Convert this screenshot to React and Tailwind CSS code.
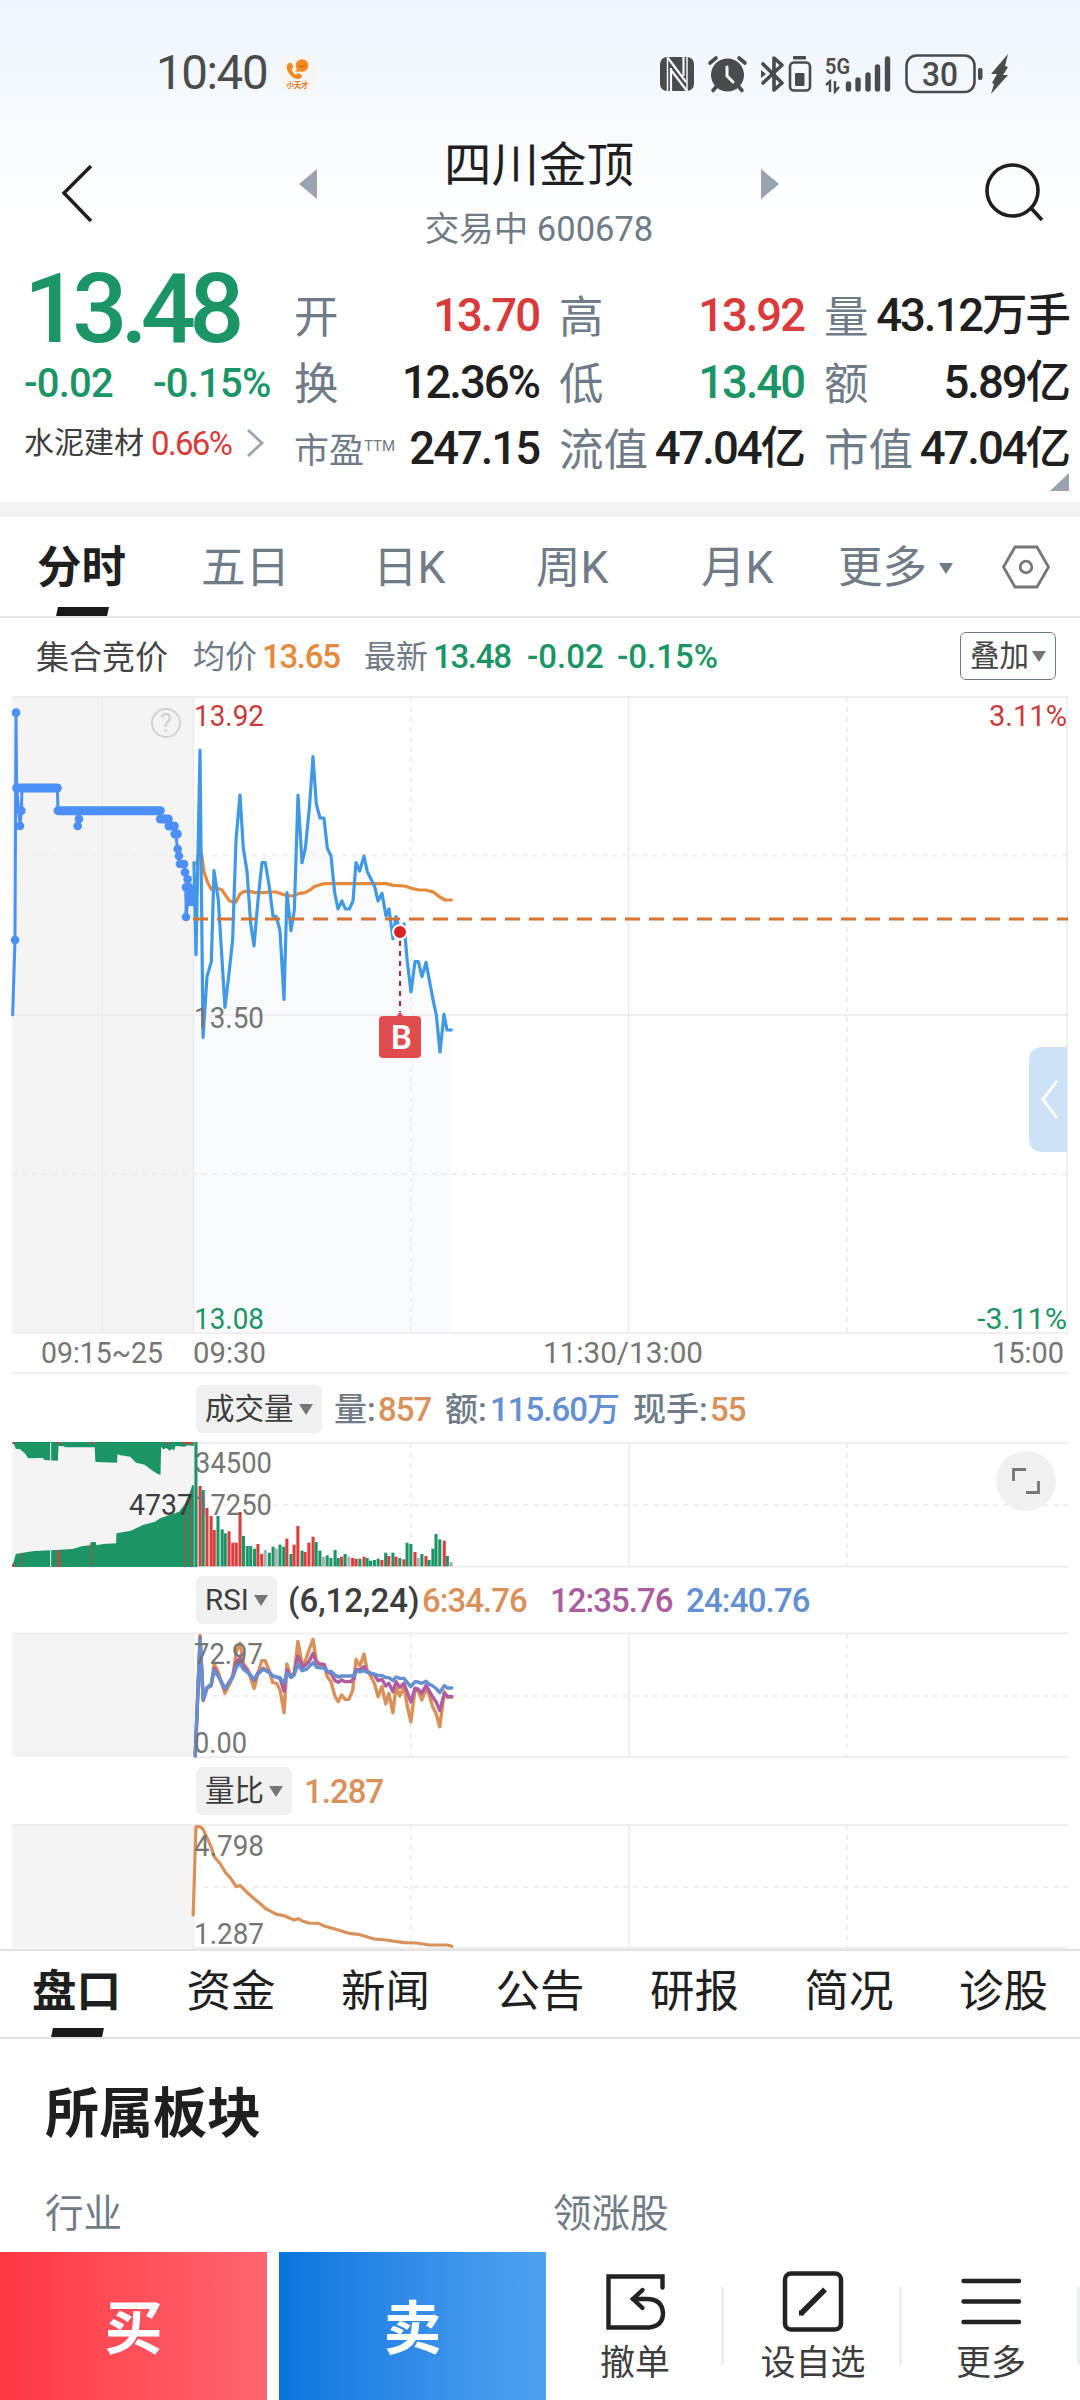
import React, { useState } from 'react'

const GREY = '#6f7b87'
const DOWN = '#1b9566'
const GRID = '#efeff0'

const QUOTES = [
  [{ k: '开', v: '13.70', c: 'text-[#d93a3a]' }, { k: '高', v: '13.92', c: 'text-[#d93a3a]' }, { k: '量', v: '43.12万手', c: 'text-[#1f1f1f]' }],
  [{ k: '换', v: '12.36%', c: 'text-[#1f1f1f]' }, { k: '低', v: '13.40', c: 'text-[#1b9566]' }, { k: '额', v: '5.89亿', c: 'text-[#1f1f1f]' }],
  [{ k: '市盈', sup: 'TTM', v: '247.15', c: 'text-[#1f1f1f]' }, { k: '流值', v: '47.04亿', c: 'text-[#1f1f1f]' }, { k: '市值', v: '47.04亿', c: 'text-[#1f1f1f]' }]
]

const PERIODS = [
  { id: '分时', w: 'w-[164px]' },
  { id: '五日', w: 'w-[172px]' },
  { id: '日K', w: 'w-[163px]' },
  { id: '周K', w: 'w-[165px]' },
  { id: '月K', w: 'w-[137px]' }
]

const INFO_TABS = ['盘口', '资金', '新闻', '公告', '研报', '简况', '诊股']

// Series points, three units to a pixel.
const PRICE = '582,518 588,794 600,180 609,1042 621,860 634,815 642,542 655,630 675,952 687,850 698,748 708,450 720,315 730,475 741,543 752,700 762,768 775,620 786,518 796,518 808,590 819,678 829,680 840,722 852,928 861,608 873,722 883,660 894,315 906,518 916,475 928,355 939,200 949,342 960,384 972,384 982,475 993,498 1004,608 1014,657 1026,633 1036,657 1048,657 1059,633 1068,518 1079,543 1092,498 1102,545 1113,567 1124,590 1134,633 1146,610 1158,678 1167,657 1179,746 1188,680 1200,724 1212,702 1222,815 1233,906 1245,815 1255,815 1266,860 1278,817 1288,870 1299,928 1309,975 1320,1086 1332,973 1341,1020 1354,1020'
const AVERAGE = '583,522 590,520 600,470 606,500 612,545 622,575 634,598 650,594 666,600 676,615 688,632 698,636 708,636 720,612 732,604 750,604 765,608 790,608 808,606 829,606 845,612 860,617 880,618 895,611 915,608 930,600 942,590 960,584 975,581 1158,581 1180,586 1213,588 1235,595 1258,600 1278,600 1300,606 1318,620 1335,630 1354,630'
const AUCTION = '38,975 45,750 48,68 50,294 60,408 64,362 66,294 172,294 174,362 232,362 233,408 237,387 240,362 482,362 480,387 505,387 508,408 522,408 527,432 533,477 537,498 540,522 552,522 555,547 563,568 558,592 558,681 568,600 572,640 576,590 580,645'
const AUCTION_DOTS = [[48, 68], [45, 750], [60, 408], [64, 362], [233, 408], [237, 387], [533, 477], [537, 498], [540, 522], [552, 522], [555, 547], [563, 568], [558, 592], [568, 592], [566, 615], [573, 636], [558, 681]]
const AUCTION_RUNS = [[50, 172, 294], [174, 481, 362], [481, 505, 387], [507, 523, 408], [525, 532, 432]]

const VOL_TOP = '36,216 40,222 46,236 58,238 72,250 82,265 125,264 128,270 168,272 170,228 186,229 188,232 275,232 277,276 340,278 341,253 350,256 378,260 395,278 420,284 440,300 458,312 466,314 468,230 474,238 484,234 492,242 500,236 505,242 510,228 536,230 545,226 563,228 563,216'
const VOL_BASE = '36,591 36,588 46,552 80,546 100,543 160,540 210,537 240,528 262,526 266,516 278,516 280,526 300,522 337,520 338,490 380,482 415,465 450,455 465,445 520,425 535,405 552,365 558,346 563,346 563,591'
const BARS = '581 348 r;590 360 g;601 414 r;613 438 r;622 480 r;633 438 g;645 478 g;654 490 g;665 484 r;676 518 r;686 518 r;697 426 r;707 498 g;718 528 g;728 528 g;739 536 g;749 522 r;760 552 r;770 540 n;782 548 g;793 530 g;802 536 n;813 524 g;824 530 g;833 506 r;845 552 g;854 524 r;865 468 r;877 542 g;886 546 r;897 518 r;909 500 r;918 516 g;929 542 g;939 560 n;950 556 g;961 564 g;973 540 g;982 564 g;992 560 r;1002 552 g;1013 560 n;1024 564 r;1034 566 r;1045 566 g;1057 560 r;1066 564 g;1076 572 g;1087 570 g;1098 566 g;1109 570 r;1120 548 g;1129 558 r;1141 548 g;1150 560 r;1161 564 g;1173 568 r;1182 518 g;1193 522 g;1205 546 r;1214 564 n;1225 552 g;1237 558 r;1246 570 g;1257 536 g;1266 492 g;1277 508 g;1290 512 r;1299 558 g;1310 576 n'
  .split(';').map(s => s.split(' '))
const BAR_COLOR = { r: '#dc3d3d', g: '#1b9566', n: '#a9b0ae' }

const RSI6 = '567,408 581,46 590,242 601,205 613,198 622,132 633,155 653,220 668,190 676,170 686,95 697,70 707,130 720,150 728,175 738,205 748,165 760,122 770,122 781,150 792,188 803,190 813,210 825,278 833,132 845,172 854,165 865,64 877,130 886,125 897,90 909,58 918,120 929,135 941,135 950,170 961,185 973,230 982,245 992,225 1002,238 1013,238 1024,212 1034,118 1045,138 1057,102 1066,150 1076,168 1087,190 1098,230 1109,200 1120,252 1129,220 1141,278 1150,200 1161,228 1173,200 1182,255 1193,305 1205,210 1214,212 1225,240 1237,205 1246,225 1257,262 1266,280 1277,320 1290,215 1299,232 1312,232'
const RSI12 = '567,406 581,52 590,240 601,203 613,195 622,145 633,165 653,208 676,168 686,125 697,115 707,138 720,155 738,182 748,160 765,145 781,155 792,168 813,175 825,214 833,150 845,172 854,160 865,108 880,142 897,125 909,100 920,130 941,133 950,155 961,160 973,182 982,187 992,180 1002,185 1018,185 1028,175 1034,148 1045,150 1057,140 1066,155 1087,165 1098,182 1109,178 1120,198 1129,190 1141,215 1150,185 1161,202 1173,190 1182,215 1193,246 1205,205 1214,207 1225,220 1237,196 1246,212 1257,232 1266,245 1277,272 1290,220 1299,229 1312,229'
const RSI24 = '567,408 581,58 590,238 601,203 613,195 622,152 633,168 653,205 676,172 686,142 697,130 707,148 720,158 738,178 748,162 765,148 781,158 792,168 813,173 825,190 833,158 845,172 854,165 865,132 877,152 890,148 909,128 920,142 941,145 950,154 961,154 973,165 982,171 992,168 1026,168 1034,152 1045,156 1057,152 1066,157 1087,162 1098,167 1109,166 1120,173 1129,173 1141,182 1150,171 1161,175 1173,175 1182,187 1193,200 1205,185 1214,186 1225,190 1237,184 1246,193 1257,198 1266,205 1277,218 1290,197 1299,204 1312,204'
const RATIO = '561,885 569,620 581,620 590,628 613,680 622,710 640,732 655,758 670,775 686,800 698,797 720,820 740,838 760,855 770,865 803,883 825,887 854,900 865,896 880,904 897,909 925,910 941,918 975,928 1013,940 1040,943 1087,957 1120,960 1173,968 1210,969 1246,975 1299,975 1312,979'

function Label({ x, y, w, end, fill = '#757575', children }) {
  return (
    <text x={x} y={y} textLength={w} lengthAdjust="spacingAndGlyphs" textAnchor={end ? 'end' : 'start'} fontSize="29.5" fill={fill}>
      {children}
    </text>
  )
}

function Line({ points, color, width = 3.6 }) {
  return <polyline points={points} fill="none" stroke={color} strokeWidth={width} strokeLinejoin="round" strokeLinecap="round" vectorEffect="non-scaling-stroke" />
}

function Caret({ className = '', color = '#757575' }) {
  return (
    <svg className={className} width="14" height="11" viewBox="0 0 14 11"><path d="M0 0H14L7 11Z" fill={color} /></svg>
  )
}

// Grid shared by the three small panes under the price chart.
function PaneGrid({ top, mid, bottom }) {
  return (
    <g stroke={GRID} strokeWidth="2">
      <rect x="12" y={top} width="181" height={bottom - top} fill="#f4f4f4" stroke="none" />
      <path d={`M12 ${top}H1068M193 ${bottom}H1068`} />
      <path d={`M193.5 ${top}V${bottom}M629 ${top}V${bottom}`} />
      <path d={`M193 ${mid}H1068`} strokeDasharray="5 5" />
      <path d={`M411 ${top}V${bottom}M847 ${top}V${bottom}`} strokeDasharray="5 5" />
    </g>
  )
}

function Chip({ children }) {
  return (
    <button className="flex h-12 items-center gap-[5px] rounded-md bg-[#f1f1f1] px-[9px] text-[29.500px] whitespace-nowrap text-[#3d3d3d]">
      <span className="pt-0.5">{children}</span><Caret />
    </button>
  )
}

function StatusBar() {
  return (
    <div className="flex h-[113px] pt-[52px] pl-[156px] text-[#4a4b4d]">
      <span className="w-[123px] text-[47.500px] leading-[42px] tracking-[-0.03em]">10:40</span>
      <svg width="36" height="37" viewBox="279 56 36 37" className="mt-[4px]">
        <rect x="279" y="56" width="36" height="36" rx="7" fill="#f8f6f4" />
        <path d="M289 63C285.500 65 286.500 70 289.500 74C292.500 78 297 80 300 78.500C302 77.500 302.500 76 301.500 75L298 73L295.500 75C293.500 73.500 292 71 291.500 69L293.500 67.500L292 63.500C291 62.500 290 62.500 289 63Z" fill="#f58a1f" />
        <circle cx="302" cy="65.500" r="6.300" fill="#f58a1f" />
        <path d="M298 68L295 72L301 71Z" fill="#f58a1f" />
        <path d="M299 65.500Q302 68.500 305 65.500" stroke="#b85c10" fill="none" />
        <text x="286.500" y="87.500" fontSize="7.500" textLength="22" fontWeight="bold" fill="#e07a1a">小天才</text>
      </svg>
      <svg className="ml-[341px]" width="360" height="44" viewBox="656 51 360 44" fill="#4a4b4d">
        {/* NFC */}
        <rect x="660" y="56" width="34" height="34" rx="7" />
        <path d="M667.500 91V56" stroke="#f3f7fe" strokeWidth="1.500" />
        <path d="M687 90V55" stroke="#f3f7fe" strokeWidth="1.500" />
        <path d="M668 57L686 81M671 67V92M671 69L687 90M683.500 55V75" fill="none" stroke="#f3f7fe" strokeWidth="2.200" />
        {/* alarm */}
        <circle cx="727.500" cy="74" r="16.500" />
        <g fill="none" stroke="#4a4b4d" strokeWidth="3.600" strokeLinecap="round">
          <path d="M710 62L716 57M745 62L739 57M716 86L713 89.500M739 86L742 89.500" />
          <path d="M727 66V75L733 81" stroke="#f3f7fe" strokeWidth="3" />
        </g>
        {/* bluetooth */}
        <path d="M763 63L782 82L774 89V57L782 64L763 82" fill="none" stroke="#4a4b4d" strokeWidth="3.600" strokeLinejoin="round" strokeLinecap="round" />
        <path d="M761 69L766 73L761 77Z" />
        <rect x="790" y="61.500" width="20" height="28" rx="4" fill="none" stroke="#4a4b4d" strokeWidth="2.600" />
        <rect x="793" y="55" width="13" height="3.500" rx="1" />
        <rect x="795" y="72" width="9.500" height="13" rx="1" />
        {/* signal */}
        <text x="825" y="72.500" fontSize="22" fontWeight="600" textLength="25" lengthAdjust="spacingAndGlyphs">5G</text>
        <path d="M826 84L830 80.500V91M835 80V90.500L839 86" fill="none" stroke="#4a4b4d" strokeWidth="2.400" />
        <g stroke="#4a4b4d" strokeWidth="5.400" strokeLinecap="round">
          <path d="M848.500 83V88M858 79V88M868 74V88M877.500 66V88M887.500 58V88" />
        </g>
        {/* battery */}
        <rect x="906.500" y="54.500" width="68" height="36.500" rx="10" fill="none" stroke="#4a4b4d" strokeWidth="2.600" />
        <text x="940" y="84.500" fontSize="33" fontWeight="500" textAnchor="middle" textLength="36" lengthAdjust="spacingAndGlyphs">30</text>
        <rect x="978" y="67" width="4.500" height="12" rx="2" />
        <path d="M1008 53L991 73H997L992 82L994 83L991 93L1008 74H1003L1008 66L1005 65Z" />
      </svg>
    </div>
  )
}

function TitleBar() {
  return (
    <header className="flex h-[137px] items-start justify-between pr-[34px] pl-9">
      <button className="mt-[50px] ml-6"><svg width="36" height="60" viewBox="0 0 36 60"><path d="M31 3L4 30L31 58" fill="none" stroke="#1f1f1f" strokeWidth="3.5" /></svg></button>
      <div className="flex w-[480px] items-start justify-between">
        <svg className="mt-[55px]" width="18" height="32" viewBox="0 0 18 32"><path d="M18 1V31L0 16Z" fill="#9aa4b0" /></svg>
        <div className="text-center">
          <h1 className="mt-[28px] text-[47.500px] leading-[50px] text-[#1f1f1f]">四川金顶</h1>
          <p className="mt-[18px] text-[34.500px] leading-[40px] text-[#6f7b87]">交易中 600678</p>
        </div>
        <svg className="mt-[55px]" width="18" height="32" viewBox="0 0 18 32"><path d="M0 1V31L18 16Z" fill="#9aa4b0" /></svg>
      </div>
      <button className="mt-[48px]"><svg width="64" height="62" viewBox="0 0 64 62"><g fill="none" stroke="#1f1f1f" strokeWidth="3.6"><circle cx="30.500" cy="29.500" r="25.500" /><path d="M49 47L60 59" /></g></svg></button>
    </header>
  )
}

function Quote() {
  return (
    <section className="flex h-[252px] pr-[11px]">
      <div className="flex w-[294px] shrink-0 flex-col pl-6 text-[#1b9566]">
        <div className="mt-[5px] h-[108px] text-[97px] leading-[108px] font-medium tracking-[-0.07em]">13.48</div>
        <div className="mt-[-1px] flex h-[44px] text-[40px] leading-[44px] font-medium tracking-[-0.02em]">
          <span className="w-[129px]">-0.02</span><span>-0.15%</span>
        </div>
        <div className="mt-[17px] flex h-10 items-center text-[30px] whitespace-nowrap text-[#3d3d3d]">
          水泥建材
          <span className="ml-[7px] w-[95px] text-[33px] tracking-[-0.05em] text-[#d93a3a]">0.66%</span>
          <svg width="19" height="30" viewBox="0 0 19 30"><path d="M2 2L16 15L2 28" fill="none" stroke="#9aa4b0" strokeWidth="2.8" /></svg>
        </div>
      </div>
      <div className="relative mt-[33px] flex flex-1 flex-col">
        {QUOTES.map((row, i) => (
          <div key={i} className="grid h-[66.5px] grid-cols-[245px_245px_245px] gap-x-[20px]">
            {row.map(q => (
              <div key={q.k} className="flex items-center justify-between whitespace-nowrap">
                <span className={q.sup ? 'flex pt-1 text-[35px] text-[#6f7b87]' : 'pt-1 text-[44.500px] text-[#6f7b87]'}>
                  {q.k}{q.sup && <sup className="pt-[12px] text-[15px] leading-4">{q.sup}</sup>}
                </span>
                <span className={`text-[45.500px] leading-[50px] font-medium tracking-[-0.045em] ${q.c}`}>{q.v}</span>
              </div>
            ))}
          </div>
        ))}
        <svg className="absolute right-0 top-[190px]" width="19" height="18" viewBox="0 0 19 18"><path d="M19 0V18H0Z" fill="#9aa4b0" /></svg>
      </div>
    </section>
  )
}

function PeriodTabs() {
  const [period, setPeriod] = useState('分时')
  return (
    <nav className="flex h-[101px] items-center border-b-2 border-[#e9e9ea] pl-[37px] text-[44.500px] text-[#6f7b87]">
      {PERIODS.map(p => (
        <button key={p.id} onClick={() => setPeriod(p.id)} className={`relative h-full pt-[3px] text-left ${p.w} ${period === p.id ? 'font-bold text-[#1f1f1f]' : ''}`}>
          {p.id}
          {period === p.id && <i className="absolute bottom-0 left-[20px] h-[9px] w-[51px] -skew-x-12 bg-[#1a1a1a]" />}
        </button>
      ))}
      <button className="flex w-[164px] items-center gap-3 pt-[3px]">更多<Caret color={GREY} /></button>
      <svg width="48" height="44" viewBox="0 0 48 44" fill="none" stroke="#777" strokeWidth="2.8">
        <path d="M13 2H35L46.500 22L35 42H13L1.500 22Z" /><circle cx="24" cy="22" r="5.800" />
      </svg>
    </nav>
  )
}

function PriceInfo() {
  return (
    <div className="flex h-[72px] items-center pt-1 pr-6 pl-9 text-[33px] whitespace-nowrap">
      <span className="w-[157px] pt-0.5 text-[#444]">集合竞价</span>
      <span className="w-[69px] pt-0.5 text-[32px] text-[#6f7b87]">均价</span>
      <span className="w-[102px] font-medium tracking-[-0.04em] text-[#e58a3c]">13.65</span>
      <span className="w-[69px] pt-0.5 text-[32px] text-[#6f7b87]">最新</span>
      <span className="w-[94px] font-medium tracking-[-0.04em] text-[#1b9566]">13.48</span>
      <span className="w-[90px] font-medium text-[#1b9566]">-0.02</span>
      <span className="font-medium text-[#1b9566]">-0.15%</span>
      <button className="ml-auto flex h-[48px] w-[96px] items-center justify-center gap-[3px] rounded-md border border-[#6f7b87] text-[29.500px] text-[#444]"><span className="pt-0.5">叠加</span><Caret /></button>
    </div>
  )
}

function PriceChart() {
  return (
    <svg className="block" width="1080" height="684" viewBox="0 690 1080 684">
      <rect x="12" y="697" width="181" height="636" fill="#f4f4f4" />
      <g transform="translate(0 690) scale(0.33333)">
        <polygon points={`581,1929 ${PRICE} 1354,1929`} fill="#f9fafe" />
      </g>
      <g fill="none" stroke={GRID} strokeWidth="2">
        <path d="M12 697H1068M12 1015H1068M12 1333H1068M12 1373H1068" />
        <path d="M102 697V1333M193.500 697V1333M628.500 697V1333M1067 697V1333" stroke="#ebebec" strokeWidth="1.500" />
        <path d="M12 855.500H1068M12 1174H1068" strokeDasharray="5 5" />
        <path d="M411 697V1333M847 697V1333" strokeDasharray="5 5" />
      </g>
      <circle cx="166" cy="723" r="14" fill="none" stroke="#d2d2d2" strokeWidth="2" />
      <text x="166" y="732" fontSize="25" textAnchor="middle" fill="#d2d2d2">?</text>
      <g transform="translate(0 690) scale(0.33333)">
        <Line points={AUCTION} color="#4b8ff7" width={3} />
        {AUCTION_RUNS.map(([a, b, y]) => <path key={a} d={`M${a} ${y}H${b}`} stroke="#4b8ff7" strokeWidth="27" strokeLinecap="round" />)}
        {AUCTION_DOTS.map(([x, y], i) => <circle key={i} cx={x} cy={y} r="13" fill="#4b8ff7" />)}
        <Line points={AVERAGE} color="#e58a3c" width={3.2} />
        <Line points={PRICE} color="#4199e6" width={3.2} />
      </g>
      <path d="M193 919H1068" stroke="#d9742f" strokeWidth="3.2" strokeDasharray="15 9" />
      <Label x={194} y={726} w={70} fill="#c93a3a">13.92</Label>
      <Label x={194} y={1028} w={70}>13.50</Label>
      <Label x={194} y={1329} w={70} fill={DOWN}>13.08</Label>
      <Label x={1067} y={726} w={78} end fill="#c93a3a">3.11%</Label>
      <Label x={1067} y={1329} w={90} end fill={DOWN}>-3.11%</Label>
      <Label x={41} y={1363} w={122}>09:15~25</Label>
      <Label x={193} y={1363} w={73}>09:30</Label>
      <Label x={543} y={1363} w={160}>11:30/13:00</Label>
      <Label x={1064} y={1363} w={72} end>15:00</Label>
      {/* buy marker */}
      <path d="M400 941V1012" stroke="#9c3540" strokeWidth="2.2" strokeDasharray="5 5" />
      <circle cx="400" cy="932" r="7" fill="#d82424" stroke="#fff" strokeWidth="2" />
      <path d="M396 1017L400 1012L404 1017Z" fill="#e04c4e" />
      <rect x="379" y="1016" width="42" height="42" rx="4" fill="#e04c4e" />
      <text x="401.500" y="1049" fontSize="33" fontWeight="600" textAnchor="middle" fill="#fff">B</text>
      <path d="M1067 1047H1043Q1029 1047 1029 1061V1138Q1029 1152 1043 1152H1067Z" fill="#cbe2f7" />
      <path d="M1057 1081L1043 1099.500L1057 1118" fill="none" stroke="#fff" strokeWidth="2.800" />
    </svg>
  )
}

function VolumePane() {
  return (
    <>
      <div className="flex h-[68px] items-center pt-0.5 pl-[196px] text-[33px] font-medium whitespace-nowrap text-[#6f7b87]">
        <div className="w-[138px] font-normal"><Chip>成交量</Chip></div>
        <span className="w-[44px]">量:</span><span className="w-[67px] tracking-[-0.03em] text-[#d9915a]">857</span>
        <span className="w-[45px]">额:</span><span className="w-[143px] tracking-[-0.03em] text-[#648fd0]">115.60万</span>
        <span className="w-[77px]">现手:</span><span className="tracking-[-0.03em] text-[#d9915a]">55</span>
      </div>
      <svg className="block overflow-visible" width="1080" height="126" viewBox="0 1442 1080 126">
        <PaneGrid top={1443} mid={1505} bottom={1566.5} />
        <g transform="translate(0 1370) scale(0.34439 0.33333)">
          <polygon points={VOL_TOP} fill="#1b9566" />
          <polygon points={VOL_BASE} fill="#1b9566" />
          <path d="M36 219H44M164 219H176M262 219H272M480 219H490M530 219H560" stroke="#b5493a" strokeWidth="6" />
          <path d="M147 218V591" stroke="#f4f4f4" strokeWidth="3" />
          <path d="M61 550V591M165 541V591M170 541V591M175 541V591M265 518V591M537 405V591M555 362V591" stroke="#7b6a4d" strokeWidth="5" />
          <path d="M38 582V591" stroke="#dc3d3d" strokeWidth="6" />
          <path d="M569 216V591" stroke="#1b9566" strokeWidth="9" />
          {BARS.map(([x, y, c]) => <path key={x} d={`M${x} ${y}V589`} stroke={BAR_COLOR[c]} strokeWidth="9" />)}
        </g>
        <Label x={195} y={1473} w={77}>34500</Label>
        <Label x={195} y={1515} w={77}>17250</Label>
        <Label x={129} y={1515} w={64} fill="#3d3d3d">4737</Label>
        <circle cx="1026" cy="1481" r="30" fill="#f1f1f2" />
        <path d="M1013.500 1481V1469.500H1026M1026 1492.500H1038.500V1481" fill="none" stroke="#777" strokeWidth="2.800" />
      </svg>
    </>
  )
}

function RsiPane() {
  return (
    <>
      <div className="flex h-16 items-center pl-[196px] text-[33px] font-medium whitespace-nowrap">
        <div className="w-[92px] font-normal"><Chip>RSI</Chip></div>
        <span className="w-[134px] text-[#3d3d3d]">(6,12,24)</span>
        <span className="w-[128px] tracking-[-0.03em] text-[#d9915a]">6:34.76</span>
        <span className="w-[136px] tracking-[-0.03em] text-[#a95ca0]">12:35.76</span>
        <span className="tracking-[-0.025em] text-[#648fd0]">24:40.76</span>
      </div>
      <svg className="block overflow-visible" width="1080" height="126" viewBox="0 1632 1080 126">
        <PaneGrid top={1633.5} mid={1696} bottom={1757} />
        <g transform="translate(0 1620) scale(0.34439 0.33333)">
          <Line points={RSI6} color="#d9915a" width={3.4} />
          <Line points={RSI12} color="#b05ca0" width={3.4} />
          <Line points={RSI24} color="#648fd0" width={3.4} />
        </g>
        <Label x={194} y={1664} w={69}>72.97</Label>
        <Label x={194} y={1753} w={53}>0.00</Label>
      </svg>
    </>
  )
}

function RatioPane() {
  return (
    <>
      <div className="flex h-[66px] items-center gap-[12px] pl-[196px] text-[33px] whitespace-nowrap">
        <Chip>量比</Chip>
        <span className="font-medium tracking-[-0.03em] text-[#d9915a]">1.287</span>
      </div>
      <svg className="block overflow-visible" width="1080" height="125" viewBox="0 1824 1080 125">
        <PaneGrid top={1825} mid={1887} bottom={1948} />
        <g transform="translate(0 1620) scale(0.34439 0.33333)">
          <Line points={RATIO} color="#d9915a" width={3.2} />
        </g>
        <Label x={194} y={1856} w={70}>4.798</Label>
        <Label x={194} y={1944} w={70}>1.287</Label>
      </svg>
    </>
  )
}

function InfoTabs() {
  const [tab, setTab] = useState('盘口')
  return (
    <nav className="flex h-[90px] justify-between border-y-2 border-[#e2e2e2] px-8 text-[44.500px] text-[#1f1f1f]">
      {INFO_TABS.map(t => (
        <button key={t} onClick={() => setTab(t)} className={`relative h-full pb-[3px] ${tab === t ? 'font-bold' : ''}`}>
          {t}
          {tab === t && <i className="absolute bottom-0 left-[20px] h-[9px] w-[51px] -skew-x-12 bg-[#1a1a1a]" />}
        </button>
      ))}
    </nav>
  )
}

function BottomBar() {
  return (
    <footer className="flex h-[148px] bg-white text-[35px] text-[#3d3d3d]">
      <button className="mr-3 w-[267px] bg-linear-to-r from-[#ff3543] to-[#ff646f] pt-1.5 text-[58px] font-bold text-white">买</button>
      <button className="w-[267px] bg-linear-to-r from-[#0575de] to-[#4fa2f0] pt-1.5 text-[58px] font-bold text-white">卖</button>
      <button className="relative flex flex-1 flex-col items-center pt-[18px]">
        <svg width="62" height="64" viewBox="605 2270 62 64" fill="none" stroke="#222" strokeWidth="4.4">
          <path d="M663.500 2287.500V2276.500H609.500V2327.500H650Q664 2326 664 2313Q663 2299 648 2299H634" strokeLinecap="round" />
          <path d="M643.500 2290L634 2299L643.500 2308" strokeLinecap="round" />
        </svg>
        <span className="mt-[5px] leading-[50px]">撤单</span>
        <i className="absolute right-0 top-[35px] h-[78px] w-[3px] bg-[#ecefef]" />
      </button>
      <button className="relative flex flex-1 flex-col items-center pt-[18px]">
        <svg width="62" height="64" viewBox="782 2270 62 64" fill="none" stroke="#222">
          <rect x="785" y="2273.500" width="56" height="56" rx="6" strokeWidth="4.500" />
          <path d="M800.500 2314L825 2289.500" strokeWidth="5.500" />
          <path d="M799 2310V2315.500H804Z" fill="#222" stroke="none" />
        </svg>
        <span className="mt-[5px] leading-[50px]">设自选</span>
        <i className="absolute right-0 top-[35px] h-[78px] w-[3px] bg-[#ecefef]" />
      </button>
      <button className="relative flex flex-1 flex-col items-center pt-[18px]">
        <svg width="62" height="64" viewBox="959.500 2270 62 64" stroke="#222" strokeWidth="4.400" strokeLinecap="round">
          <path d="M963 2281H1018.500M963 2301.500H1018.500M963 2322H1018.500" />
        </svg>
        <span className="mt-[5px] leading-[50px]">更多</span>
        <i className="absolute right-0 top-[35px] h-[78px] w-[3px] bg-[#ecefef]" />
      </button>
    </footer>
  )
}

export default function App() {
  return (
    <div className="flex h-[2400px] w-[1080px] flex-col overflow-hidden bg-white bg-[linear-gradient(180deg,#eef5fe_0px,#ffffff_230px)] font-['Roboto','Noto_Sans_CJK_SC',sans-serif] leading-none">
      <StatusBar />
      <TitleBar />
      <Quote />
      <div className="h-[15px] shrink-0 bg-[#f4f4f4]" />
      <PeriodTabs />
      <PriceInfo />
      <PriceChart />
      <VolumePane />
      <RsiPane />
      <RatioPane />
      <InfoTabs />
      <section className="flex-1 px-[45px] text-[#1f1f1f]">
        <h2 className="mt-[46px] text-[54px] leading-[60px] font-bold">所属板块</h2>
        <div className="mt-[45px] flex text-[38.500px] leading-[48px] text-[#6f7b87]">
          <span className="w-[508px]">行业</span><span>领涨股</span>
        </div>
      </section>
      <BottomBar />
    </div>
  )
}
